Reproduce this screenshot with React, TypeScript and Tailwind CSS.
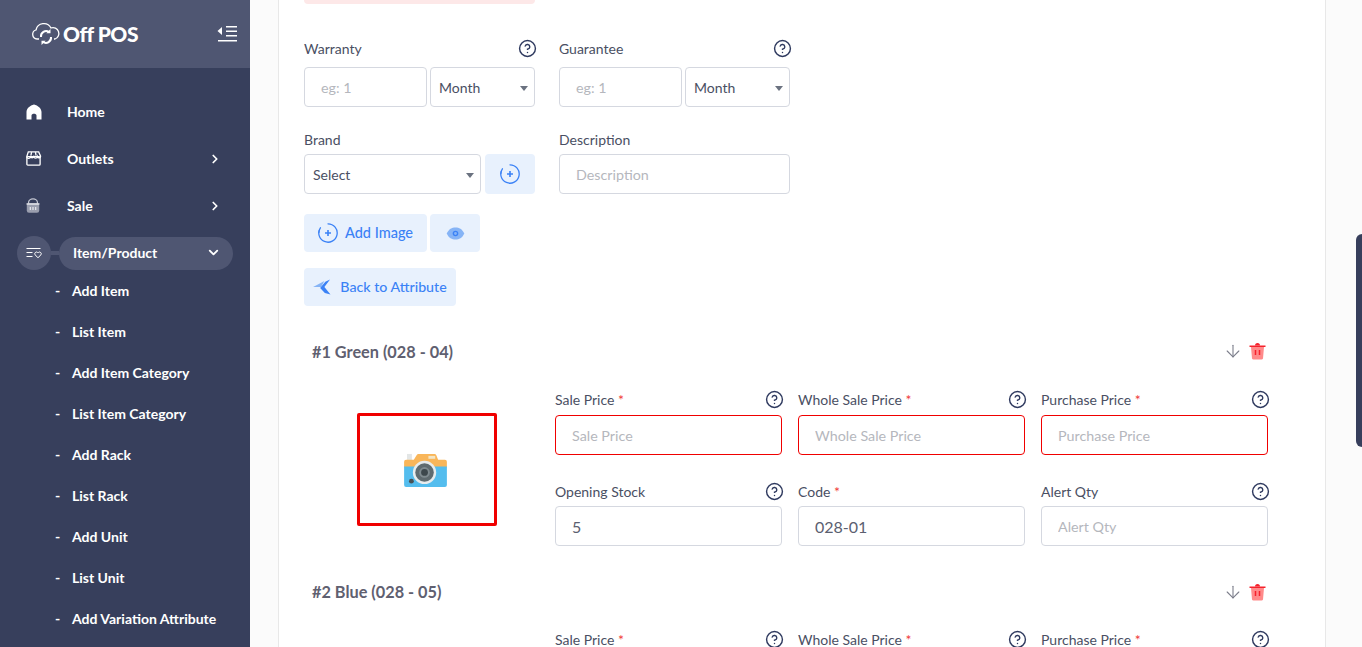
import React from 'react';
import { ArrowDown, ChevronDown, ChevronRight, CircleHelp } from 'lucide-react';

const FONT = "font-['Lato','Noto_Sans',sans-serif]";

const SUB_ITEMS = [
  'Add Item',
  'List Item',
  'Add Item Category',
  'List Item Category',
  'Add Rack',
  'List Rack',
  'Add Unit',
  'List Unit',
  'Add Variation Attribute',
];

const HomeIcon = () => (
  <svg viewBox="0 0 18 18" className="w-[18px] h-[18px]" fill="#fff">
    <path d="M9 1.5 C5 2.5 1.5 5.5 1.5 9 V16.5 H6.5 V12.5 C6.5 10 11.5 10 11.5 12.5 V16.5 H16.5 V9 C16.5 5.5 13 2.5 9 1.5 Z" />
  </svg>
);

const StoreIcon = () => (
  <svg viewBox="0 0 18 18" className="w-[17px] h-[17px]" fill="none" stroke="#fff" strokeWidth="1.4">
    <rect x="2" y="7" width="14" height="9" rx="1" />
    <path d="M3.5 2h11l2 4.5a1.7 1.7 0 0 1-3.3.6 2 2 0 0 1-3.9 0 2 2 0 0 1-3.6 0 1.9 1.9 0 0 1-3.8-.1z" />
    <path d="M7 2.2 6.2 6M11 2.2l.8 3.8" />
  </svg>
);

const BasketIcon = () => (
  <svg viewBox="0 0 18 18" className="w-[16px] h-[16px]">
    <path d="M4 7V5a5 4 0 0 1 10 0v2" fill="none" stroke="#c4c7d2" strokeWidth="1.4" />
    <rect x="2" y="6" width="14" height="10.5" rx="2.5" fill="#9a9eae" />
    <rect x="1.5" y="6" width="15" height="1.6" rx="0.8" fill="#e4e5ea" />
    <path d="M6 10v3.5M9 10v3.5M12 10v3.5" stroke="#e4e5ea" strokeWidth="1.4" />
  </svg>
);

const ListHeartIcon = () => (
  <svg viewBox="0 0 16 12" className="w-[16px] h-[12px]" fill="none" stroke="#fff" strokeWidth="1">
    <path d="M0.5 1.5h14M0.5 5.5h6M0.5 9.5h6" />
    <path d="M12 10.8 9.2 7.9a1.7 1.7 0 0 1 2.4-2.4l.4.4.4-.4a1.7 1.7 0 0 1 2.4 2.4z" />
  </svg>
);

const Logo = () => (
  <svg viewBox="0 0 30 25" className="w-[30px] h-[25px]" fill="none" stroke="#fff" strokeWidth="1.3">
    <path d="M8 17H6a4.6 4.6 0 0 1-1-9 8 8 0 0 1 15-2 5.6 5.6 0 0 1 4 11h-1" />
    <path d="M10 15a5.2 5.2 0 0 1 8-5" strokeWidth="2" />
    <path d="M19.5 7v4.2h-4.2z" fill="#fff" stroke="none" />
    <path d="M20 15a5.2 5.2 0 0 1-8 5" strokeWidth="2" />
    <path d="M10.5 23v-4.2h4.2z" fill="#fff" stroke="none" />
  </svg>
);

const CollapseIcon = () => (
  <svg viewBox="0 0 20 18" className="w-[20px] h-[18px]" fill="#fff">
    <path d="M5 2v8L0.5 6z" />
    <rect x="9" y="1" width="11" height="1.5" />
    <rect x="9" y="5.5" width="11" height="1.5" />
    <rect x="9" y="10" width="11" height="1.5" />
    <rect x="1" y="15" width="19" height="1.5" />
  </svg>
);

const PlusCircle = () => (
  <svg viewBox="0 0 20 20" className="w-[20px] h-[20px]" fill="none" stroke="#3b82f6" strokeWidth="1.3">
    <path d="M10 .8a9.2 9.2 0 1 1-7.6 4" strokeLinecap="round" />
    <path d="M.9 9.5a9 9 0 0 1 .4-2" strokeLinecap="round" />
    <path d="M10 7v6M7 10h6" strokeWidth="1.6" />
  </svg>
);

const EyeIcon = () => (
  <svg viewBox="0 0 20 14" className="w-[19px] h-[13px]">
    <path d="M0.5 7C3 2 6 .5 10 .5S17 2 19.5 7C17 12 14 13.5 10 13.5S3 12 .5 7z" fill="#86b4f6" />
    <circle cx="10" cy="7" r="3" fill="#3b82f6" />
    <circle cx="10" cy="7" r="1.5" fill="#86b4f6" />
  </svg>
);

const BackIcon = () => (
  <svg viewBox="0 0 20 17" className="w-[19px] h-[16px]">
    <path d="M0 8.5 12 2 8.5 8.5z" fill="#86b4f6" />
    <path d="M18 0.5 12 8.5l6.5 8-6-1.5L7.5 9.5 13 3z" fill="#3b82f6" />
  </svg>
);

const TrashIcon = () => (
  <svg viewBox="0 0 17 18" className="w-[17px] h-[18px]">
    <path d="M2 5h13l-1 11.5a1.5 1.5 0 0 1-1.5 1h-8a1.5 1.5 0 0 1-1.5-1z" fill="#ff8a8a" />
    <rect x="0.5" y="3.5" width="16" height="1.5" fill="#f5222d" />
    <path d="M6 3.5a2.5 2.5 0 0 1 5 0z" fill="#f5222d" />
    <path d="M6.5 8v5M10.5 8v5" stroke="#f5222d" strokeWidth="1.5" />
  </svg>
);

const CameraIcon = () => (
  <svg viewBox="0 0 44 36" className="w-[43px] h-[35px] mr-[3px]">
    <rect x="3" y="2" width="5" height="8" fill="#e3e6e6" />
    <path d="M0 10a2 2 0 0 1 2-2h8l3-5a2 2 0 0 1 2-1h16a2 2 0 0 1 2 1l2 5h7a2 2 0 0 1 2 2v6H0z" fill="#f9b65a" />
    <path d="M0 15h44v19a2 2 0 0 1-2 2H2a2 2 0 0 1-2-2z" fill="#54bdee" />
    <rect x="25" y="4" width="7" height="3" fill="#f3e6c6" />
    <circle cx="21" cy="21" r="12" fill="#e7ecee" />
    <circle cx="21" cy="21" r="9.5" fill="#5f6b70" />
    <circle cx="21" cy="21" r="5.5" fill="#7f8b90" />
    <circle cx="21" cy="21" r="3.5" fill="#3d484d" />
    <circle cx="7.5" cy="30" r="2.5" fill="#475257" />
  </svg>
);

const Help = () => <CircleHelp className="w-[19px] h-[19px] -mr-[2px] text-[#2f3a5f]" strokeWidth={1.8} />;

const Caret = () => (
  <svg viewBox="0 0 8 5" className="w-[8px] h-[5px] mt-[3px]" fill="#6b7280">
    <path d="M0 0h8L4 5z" />
  </svg>
);

const Label = ({ text, required, help }: { text: string; required?: boolean; help?: boolean }) => (
  <div className="flex items-center justify-between h-[20px] text-[14px] text-[#4a4f63]">
    <span>
      {text}
      {required && <span className="text-[#f03a3a]"> *</span>}
    </span>
    {help && <Help />}
  </div>
);

const Field = ({ placeholder, value, error, className }: { placeholder?: string; value?: string; error?: boolean; className?: string }) => (
  <input
    readOnly
    placeholder={placeholder}
    value={value ?? ''}
    className={`h-[40px] w-full min-w-0 rounded-[4px] border bg-white px-[16px] text-[#5b6070] placeholder:text-[#b5b7bd] outline-none ${value ? 'text-[16px]' : 'text-[14.3px]'} ${error ? 'border-[#f00000]' : 'border-[#d5d8e0]'} ${className ?? ''}`}
  />
);

const SelectBox = ({ text, className }: { text: string; className?: string }) => (
  <div className={`flex h-[40px] items-center justify-between rounded-[4px] border border-[#d5d8e0] bg-white pl-[8px] pr-[6px] text-[14px] text-[#4a4f63] ${className ?? ''}`}>
    <span>{text}</span>
    <Caret />
  </div>
);

const PriceField = ({ label, required }: { label: string; required?: boolean }) => (
  <div>
    <div className="mb-[6px]">
      <Label text={label} required={required} help />
    </div>
    <Field placeholder={label} error={required} />
  </div>
);

const VariantHeader = ({ title }: { title: string }) => (
  <div className="flex items-center justify-between pl-[8px] pr-[59px]">
    <span className="text-[16.3px] font-bold text-[#5f6070]">{title}</span>
    <div className="mb-[2px] flex items-center gap-[6px]">
      <ArrowDown className="w-[20px] h-[20px] text-[#7b7d8a]" strokeWidth={1.3} />
      <TrashIcon />
    </div>
  </div>
);

const Sidebar = () => (
  <aside className="w-[250px] shrink-0 bg-[#373f5c] text-white">
    <div className="flex h-[68px] items-center justify-between bg-[#4f5672] pl-[31px] pr-[13px]">
      <div className="flex items-center gap-[2px]">
        <Logo />
        <span className="text-[21px] font-black tracking-[-0.5px]">Off POS</span>
      </div>
      <CollapseIcon />
    </div>
    <nav className="pt-[20px]">
      <div className="flex h-[47px] items-center pl-[25px] text-[14px] font-bold">
        <span className="flex w-[42px]"><HomeIcon /></span>Home
      </div>
      <div className="flex h-[47px] items-center pl-[25px] pr-[28px] text-[14px] font-bold">
        <span className="flex w-[42px]"><StoreIcon /></span>Outlets
        <ChevronRight className="ml-auto w-[14px] h-[14px]" strokeWidth={3} />
      </div>
      <div className="flex h-[47px] items-center pl-[25px] pr-[28px] text-[14px] font-bold">
        <span className="flex w-[42px]"><BasketIcon /></span>Sale
        <ChevronRight className="ml-auto w-[14px] h-[14px]" strokeWidth={3} />
      </div>
      <div className="mt-[7px] flex h-[34px] items-center pl-[17px] pr-[17px]">
        <span className="flex h-[34px] w-[34px] items-center justify-center rounded-full bg-[#4f5672]"><ListHeartIcon /></span>
        <span className="h-[4px] w-[8px] bg-[#4f5672]" />
        <div className="flex h-[33px] flex-1 items-center justify-between rounded-full bg-[#4f5672] pb-[1px] pl-[14px] pr-[12px] text-[14px] font-bold">
          Item/Product
          <ChevronDown className="w-[15px] h-[15px]" strokeWidth={3} />
        </div>
      </div>
      <ul>
        {SUB_ITEMS.map((item) => (
          <li key={item} className="flex h-[41px] items-center pl-[55px] text-[14px] font-bold">
            <span className="w-[17px]">-</span>
            {item}
          </li>
        ))}
      </ul>
    </nav>
  </aside>
);

export default function App() {
  return (
    <div className={`flex h-screen overflow-hidden bg-white ${FONT}`}>
      <Sidebar />
      <main className="flex flex-1 min-w-0 bg-[#fbfbfb] pl-[28px]">
        <div className="w-[1048px] shrink-0 border-x border-[#e8e8e8] bg-white pl-[25px]">
          <div className="h-[4px] w-[231px] rounded-b-[4px] bg-[#fde8e8]" />

          <div className="mt-[34px] grid w-[486px] grid-cols-2 gap-x-[24px]">
            <div>
              <div className="mb-[9px]"><Label text="Warranty" help /></div>
              <div className="flex gap-[3px]">
                <Field placeholder="eg: 1" className="flex-1" />
                <SelectBox text="Month" className="w-[105px]" />
              </div>
            </div>
            <div>
              <div className="mb-[9px]"><Label text="Guarantee" help /></div>
              <div className="flex gap-[3px]">
                <Field placeholder="eg: 1" className="flex-1" />
                <SelectBox text="Month" className="w-[105px]" />
              </div>
            </div>
            <div className="mt-[22px]">
              <div className="mb-[5px]"><Label text="Brand" /></div>
              <div className="flex gap-[4px]">
                <SelectBox text="Select" className="flex-1" />
                <button className="flex h-[40px] w-[50px] items-center justify-center rounded-[4px] bg-[#e8f1fd]"><PlusCircle /></button>
              </div>
            </div>
            <div className="mt-[22px]">
              <div className="mb-[5px]"><Label text="Description" /></div>
              <Field placeholder="Description" />
            </div>
          </div>

          <div className="mt-[20px] flex gap-[3px]">
            <button className="flex h-[38px] w-[123px] items-center justify-center gap-[7px] rounded-[4px] bg-[#e8f1fd] text-[14.5px] font-medium text-[#3b82f6]">
              <PlusCircle />Add Image
            </button>
            <button className="flex h-[38px] w-[50px] items-center justify-center rounded-[4px] bg-[#e8f1fd]"><EyeIcon /></button>
          </div>
          <button className="mt-[16px] flex h-[38px] w-[152px] items-center justify-center gap-[8px] rounded-[4px] bg-[#e8f1fd] text-[14.2px] font-medium text-[#3b82f6]">
            <BackIcon />Back to Attribute
          </button>

          <div className="mt-[34px]"><VariantHeader title="#1 Green (028 - 04)" /></div>

          <div className="mt-[25px] flex pr-[57px]">
            <div className="ml-[53px] mt-[24px] flex h-[113px] w-[140px] shrink-0 items-center justify-center rounded-[2px] border-[3px] border-[#f00000]">
              <CameraIcon />
            </div>
            <div className="ml-[58px] grid flex-1 grid-cols-3 gap-x-[16px] gap-y-[26px]">
              <PriceField label="Sale Price" required />
              <PriceField label="Whole Sale Price" required />
              <PriceField label="Purchase Price" required />
              <div>
                <div className="mb-[5px]"><Label text="Opening Stock" help /></div>
                <Field value="5" />
              </div>
              <div>
                <div className="mb-[5px]"><Label text="Code" required /></div>
                <Field value="028-01" />
              </div>
              <div>
                <div className="mb-[5px]"><Label text="Alert Qty" help /></div>
                <Field placeholder="Alert Qty" />
              </div>
            </div>
          </div>

          <div className="mt-[34px]"><VariantHeader title="#2 Blue (028 - 05)" /></div>

          <div className="mt-[25px] flex pr-[57px]">
            <div className="ml-[251px] grid flex-1 grid-cols-3 gap-x-[16px]">
              <PriceField label="Sale Price" required />
              <PriceField label="Whole Sale Price" required />
              <PriceField label="Purchase Price" required />
            </div>
          </div>
        </div>
        <div className="ml-auto w-[6px] shrink-0 pt-[234px]">
          <div className="h-[213px] rounded-l-[6px] bg-[#373f5c]" />
        </div>
      </main>
    </div>
  );
}
